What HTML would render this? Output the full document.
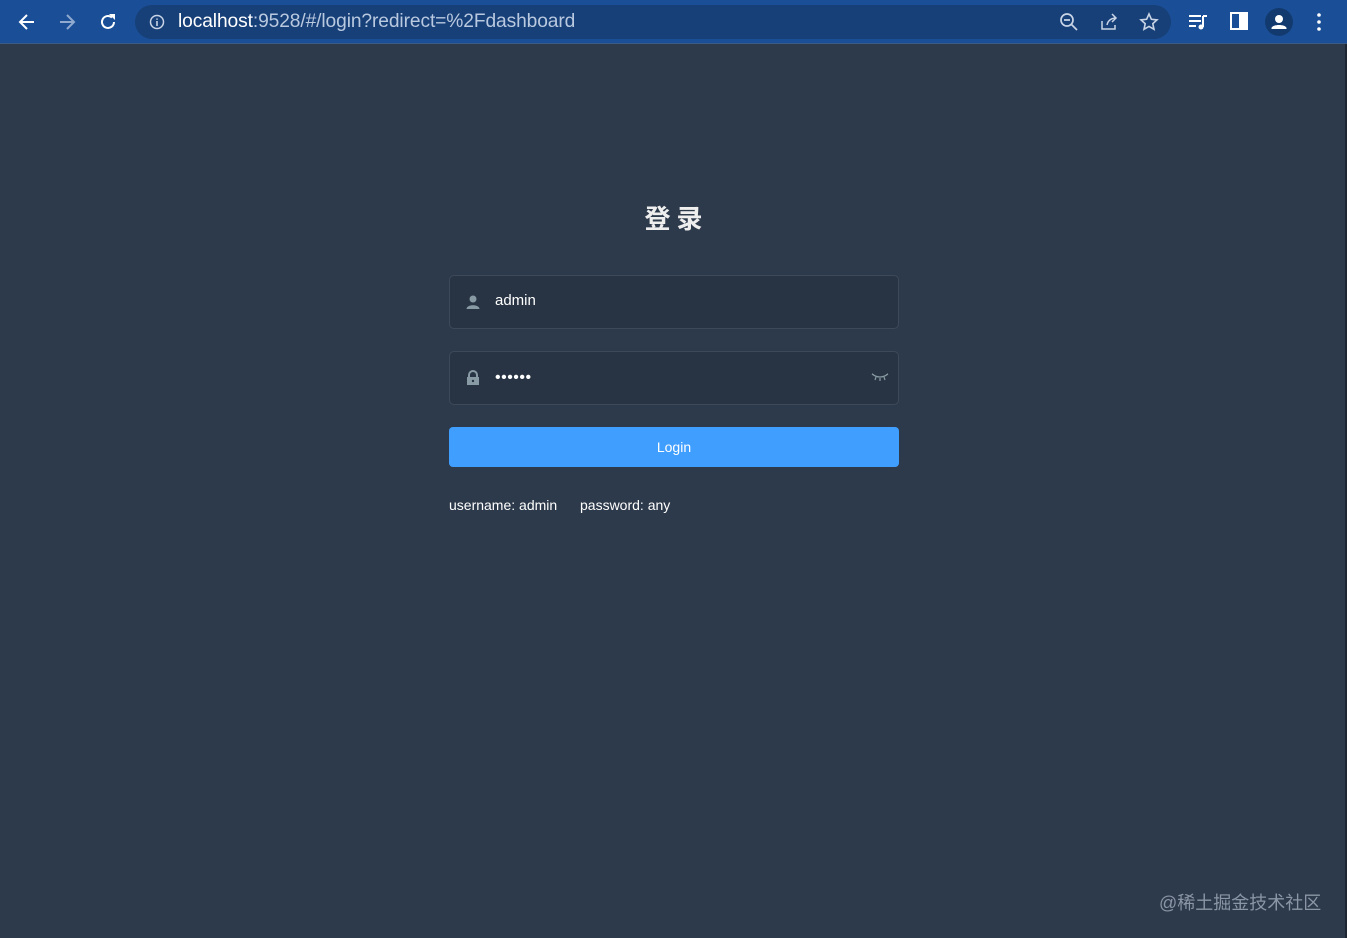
<!DOCTYPE html>
<html><head><meta charset="utf-8">
<style>
*{margin:0;padding:0;box-sizing:border-box}
html,body{width:1347px;height:938px;overflow:hidden;background:#2d3a4b;font-family:"Liberation Sans","Noto Sans CJK SC",sans-serif}
.bar{position:absolute;left:0;top:0;width:1347px;height:44px;background:#1a4f97;border-bottom:1px solid #3b5b84}
.url{position:absolute;left:135px;top:5px;width:1036px;height:34px;border-radius:17px;background:#173f78}
.url .t{position:absolute;left:43px;top:6px;font-size:19.2px;color:#b9c9df;letter-spacing:-0.1px}
.url .t b{font-weight:normal;color:#fff}
svg{position:absolute}
.title{position:absolute;left:0;width:1347px;top:199px;text-align:center;color:#eee;font-size:26px;font-weight:bold;letter-spacing:6px;padding-left:6px;font-family:"Noto Sans CJK SC",sans-serif}
.inp{position:absolute;left:449px;width:450px;height:54px;background:#283443;border:1px solid #3d4959;border-radius:5px}
.inp .tx{position:absolute;left:45px;top:16px;color:#fff;font-size:15px}
.btn{position:absolute;left:449px;top:427px;width:450px;height:40px;background:#409eff;border-radius:4px;color:#fff;font-size:14px;text-align:center;line-height:40px}
.tips{position:absolute;top:497px;color:#fff;font-size:14px}
.wm{position:absolute;left:1159px;top:889px;color:#8a96a5;font-size:18px;font-family:"Liberation Sans","Noto Sans CJK SC",sans-serif}
.edge{position:absolute;right:0;top:44px;width:2px;height:894px;background:#1d2631}
</style></head><body>
<div class="bar">
<svg style="left:17px;top:12px" width="20" height="20" viewBox="0 0 20 20"><path d="M17 10H4M10 3L3 10l7 7" stroke="#fff" stroke-width="2" fill="none"/></svg>
<svg style="left:57px;top:12px" width="20" height="20" viewBox="0 0 20 20"><path d="M3 10h13M10 3l7 7-7 7" stroke="#8fa9cf" stroke-width="2" fill="none"/></svg>
<svg style="left:97px;top:11px" width="22" height="22" viewBox="0 0 22 22"><path d="M17 11a6 6 0 1 1-2-4.5" stroke="#fff" stroke-width="2" fill="none"/><path d="M12 3h6v6z" fill="#fff"/></svg>
<div class="url">
<svg style="left:14px;top:9px" width="16" height="16" viewBox="0 0 16 16"><circle cx="8" cy="8" r="6.5" stroke="#c9d5e6" stroke-width="1.5" fill="none"/><path d="M8 7v5M8 4.5v1.2" stroke="#c9d5e6" stroke-width="1.6"/></svg>
<div class="t"><b>localhost</b>:9528/#/login?redirect=%2Fdashboard</div>
<svg style="left:924px;top:7px" width="20" height="20" viewBox="0 0 20 20"><circle cx="8" cy="8" r="6" stroke="#c9d5e6" stroke-width="1.7" fill="none"/><path d="M12.5 12.5L18 18M5 8h6" stroke="#c9d5e6" stroke-width="1.7"/></svg>
<svg style="left:964px;top:7px" width="20" height="20" viewBox="0 0 20 20"><path d="M3 9v8h13v-4M8 13c1-5 5-7 9-7M13 2l4 4-4 4" stroke="#c9d5e6" stroke-width="1.5" fill="none"/></svg>
<svg style="left:1004px;top:7px" width="20" height="20" viewBox="0 0 20 20"><path d="M10 2l2.4 5.3 5.6.6-4.2 3.8 1.2 5.6L10 14.4l-5 2.9 1.2-5.6L2 7.9l5.6-.6z" stroke="#c9d5e6" stroke-width="1.6" fill="none"/></svg>
</div>
<svg style="left:1187px;top:11px" width="22" height="22" viewBox="0 0 22 22"><path d="M2 5h12M2 10h12M2 15h7" stroke="#fff" stroke-width="2"/><path d="M16 5v11M16 5h4" stroke="#fff" stroke-width="2"/><circle cx="14" cy="16" r="2.5" fill="#fff"/></svg>
<svg style="left:1229px;top:11px" width="20" height="20" viewBox="0 0 20 20"><path d="M2 2h16v16H2z" stroke="#fff" stroke-width="2" fill="none"/><path d="M10 2h8v16h-8z" fill="#fff"/></svg>
<svg style="left:1265px;top:8px" width="28" height="28" viewBox="0 0 28 28"><circle cx="14" cy="14" r="14" fill="#123a6f"/><circle cx="14" cy="11" r="4" fill="#fff"/><path d="M6.5 20c1-4 14-4 15 0v1h-15z" fill="#fff"/></svg>
<svg style="left:1313px;top:12px" width="12" height="20" viewBox="0 0 12 20"><circle cx="6" cy="3" r="1.8" fill="#fff"/><circle cx="6" cy="10" r="1.8" fill="#fff"/><circle cx="6" cy="17" r="1.8" fill="#fff"/></svg>
</div>
<div class="title">登录</div>
<div class="inp" style="top:275px">
<svg style="left:15px;top:18px" width="16" height="16" viewBox="0 0 16 16"><circle cx="8" cy="5" r="3.5" fill="#889aa4"/><path d="M1.5 15c0-5 13-5 13 0z" fill="#889aa4"/></svg>
<div class="tx">admin</div></div>
<div class="inp" style="top:351px">
<svg style="left:15px;top:18px" width="16" height="16" viewBox="0 0 16 16"><path d="M4 7V5a4 4 0 0 1 8 0v2" stroke="#889aa4" stroke-width="2" fill="none"/><rect x="2" y="7" width="12" height="8" fill="#889aa4"/><circle cx="8" cy="11" r="1.2" fill="#283443"/></svg>
<div class="tx" style="top:17px;font-size:16px;letter-spacing:0.5px">••••••</div>
<svg style="left:421px;top:20px" width="18" height="10" viewBox="0 0 18 10"><path d="M1 2q8 6 16 0M5 5l-1 3M9 6v3M13 5l1 3M1 2l2 1M17 2l-2 1" stroke="#889aa4" stroke-width="1.2" fill="none"/></svg>
</div>
<div class="btn">Login</div>
<div class="tips" style="left:449px">username: admin</div>
<div class="tips" style="left:580px">password: any</div>
<div class="wm">@稀土掘金技术社区</div>
<div class="edge"></div>
</body></html>
